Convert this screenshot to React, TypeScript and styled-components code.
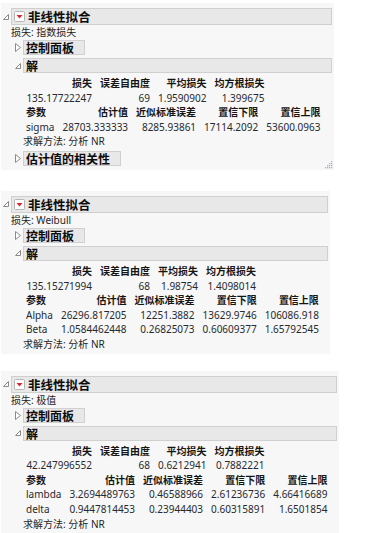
import React from "react";
import styled, { createGlobalStyle } from "styled-components";

const GlobalStyle = createGlobalStyle`
  body {
    margin: 0;
    background: #ffffff;
    font-family: "Noto Sans", "Noto Sans CJK SC", sans-serif;
    color: #1e1e1e;
  }
`;

const Page = styled.div`
  display: flex;
  flex-direction: column;
  align-items: flex-start;
  padding-left: 1px;
`;

const Panel = styled.section<{ $width: number; $top: number }>`
  position: relative;
  width: ${(p) => p.$width}px;
  margin-top: ${(p) => p.$top}px;
  padding: 5px 2px 2px 2px;
  background: #f7f7f7;
  box-sizing: border-box;
`;

const TopRow = styled.div`
  display: flex;
  align-items: center;
  gap: 2px;
`;

const HeaderBar = styled.div`
  flex: 1;
  height: 17px;
  display: flex;
  align-items: center;
  gap: 3px;
  padding-left: 2px;
  background: #e8e8e8;
  border: 1px solid #cfcfcf;
  box-sizing: border-box;
  font-family: "Noto Sans CJK SC", sans-serif;
  font-size: 12.5px;
  line-height: 13px;
  font-weight: 700;
  color: #0c0c0c;
`;

const LossNote = styled.div`
  margin-left: 8px;
  margin-top: 1px;
  font-size: 10px;
  line-height: 12px;
`;

const SubRow = styled.div<{ $top: number }>`
  display: flex;
  align-items: center;
  gap: 2px;
  padding-left: 12px;
  margin-top: ${(p) => p.$top}px;
`;

const SubBar = styled.div<{ $full?: boolean }>`
  flex: ${(p) => (p.$full ? 1 : "none")};
  height: 15px;
  padding: 0 ${(p) => (p.$full ? 2 : 10)}px 0 2px;
  display: flex;
  align-items: center;
  background: #e8e8e8;
  border: 1px solid #d0d0d0;
  box-sizing: border-box;
  font-family: "Noto Sans CJK SC", sans-serif;
  font-size: 12px;
  line-height: 13px;
  font-weight: 700;
  color: #0c0c0c;
`;

const Tables = styled.div`
  margin-top: 3px;
  margin-left: 19px;
`;

const StatsTable = styled.table<{ $labelLeft?: boolean }>`
  border-collapse: collapse;
  font-size: 10px;
  line-height: 14.6px;

  th,
  td {
    padding: 0 4px;
    text-align: right;
    white-space: nowrap;
  }
  th {
    font-family: "Noto Sans CJK SC", sans-serif;
    font-weight: 700;
    color: #151515;
  }
  td {
    color: #262a30;
  }
  th:first-child,
  td:first-child {
    text-align: ${(p) => (p.$labelLeft ? "left" : "right")};
    min-width: ${(p) => (p.$labelLeft ? 0 : 66)}px;
  }
`;

const MethodNote = styled.div`
  margin-left: 20px;
  font-size: 10px;
  line-height: 14.6px;
`;

const Grip = styled.svg`
  position: absolute;
  right: 1px;
  bottom: 1px;
`;

function OpenIcon() {
  return (
    <svg width="6" height="6" viewBox="0 0 6 6">
      <polygon points="5.5,0.5 5.5,5.5 0.5,5.5" fill="#fff" stroke="#8a8a8a" strokeWidth="1" />
    </svg>
  );
}

function ClosedIcon() {
  return (
    <svg width="6" height="9" viewBox="0 0 6 9">
      <polygon points="0.5,0.5 5.5,4.5 0.5,8.5" fill="#fff" stroke="#8a8a8a" strokeWidth="1" />
    </svg>
  );
}

function RedMenu() {
  return (
    <svg width="11" height="11" viewBox="0 0 11 11">
      <rect x="0.5" y="0.5" width="10" height="10" rx="1" fill="#fff" stroke="#b5b5b5" />
      <polygon points="2.5,4 8.5,4 5.5,7.5" fill="#e0262c" />
    </svg>
  );
}

function ResizeGrip() {
  const dots: [number, number][] = [];
  for (let r = 0; r < 4; r++) for (let c = 3 - r; c < 4; c++) dots.push([c * 2 + 1, r * 2 + 1]);
  return (
    <Grip width="9" height="9" viewBox="0 0 9 9">
      {dots.map(([x, y]) => (
        <rect key={`${x}-${y}`} x={x} y={y} width="1.3" height="1.3" fill="#a9b4c4" />
      ))}
    </Grip>
  );
}

type Fit = {
  width: number;
  top: number;
  loss: string;
  summary: string[];
  params: string[][];
  correlation?: boolean;
};

const fits: Fit[] = [
  {
    width: 333,
    top: 3,
    loss: "损失: 指数损失",
    summary: ["135.17722247", "69", "1.9590902", "1.399675"],
    params: [["sigma", "28703.333333", "8285.93861", "17114.2092", "53600.0963"]],
    correlation: true,
  },
  {
    width: 329,
    top: 21,
    loss: "损失: Weibull",
    summary: ["135.15271994", "68", "1.98754", "1.4098014"],
    params: [
      ["Alpha", "26296.817205", "12251.3882", "13629.9746", "106086.918"],
      ["Beta", "1.0584462448", "0.26825073", "0.60609377", "1.65792545"],
    ],
  },
  {
    width: 338,
    top: 17,
    loss: "损失: 极值",
    summary: ["42.247996552", "68", "0.6212941", "0.7882221"],
    params: [
      ["lambda", "3.2694489763", "0.46588966", "2.61236736", "4.66416689"],
      ["delta", "0.9447814453", "0.23944403", "0.60315891", "1.6501854"],
    ],
  },
];

function FitPanel({ fit }: { fit: Fit }) {
  return (
    <Panel $width={fit.width} $top={fit.top}>
      <TopRow>
        <OpenIcon />
        <HeaderBar>
          <RedMenu />
          非线性拟合
        </HeaderBar>
      </TopRow>
      <LossNote>{fit.loss}</LossNote>
      <SubRow $top={2}>
        <ClosedIcon />
        <SubBar>控制面板</SubBar>
      </SubRow>
      <SubRow $top={3}>
        <OpenIcon />
        <SubBar $full>解</SubBar>
      </SubRow>
      <Tables>
        <StatsTable>
          <thead>
            <tr>
              <th>损失</th>
              <th>误差自由度</th>
              <th>平均损失</th>
              <th>均方根损失</th>
            </tr>
          </thead>
          <tbody>
            <tr>
              {fit.summary.map((v, i) => (
                <td key={i}>{v}</td>
              ))}
            </tr>
          </tbody>
        </StatsTable>
        <StatsTable $labelLeft>
          <thead>
            <tr>
              <th>参数</th>
              <th>估计值</th>
              <th>近似标准误差</th>
              <th>置信下限</th>
              <th>置信上限</th>
            </tr>
          </thead>
          <tbody>
            {fit.params.map((row) => (
              <tr key={row[0]}>
                {row.map((v, i) => (
                  <td key={i}>{v}</td>
                ))}
              </tr>
            ))}
          </tbody>
        </StatsTable>
      </Tables>
      <MethodNote>求解方法: 分析 NR</MethodNote>
      {fit.correlation && (
        <>
          <SubRow $top={2}>
            <ClosedIcon />
            <SubBar>估计值的相关性</SubBar>
          </SubRow>
          <div style={{ height: 2 }} />
          <ResizeGrip />
        </>
      )}
    </Panel>
  );
}

export default function App() {
  return (
    <>
      <GlobalStyle />
      <Page>
        {fits.map((f) => (
          <FitPanel key={f.loss} fit={f} />
        ))}
      </Page>
    </>
  );
}
